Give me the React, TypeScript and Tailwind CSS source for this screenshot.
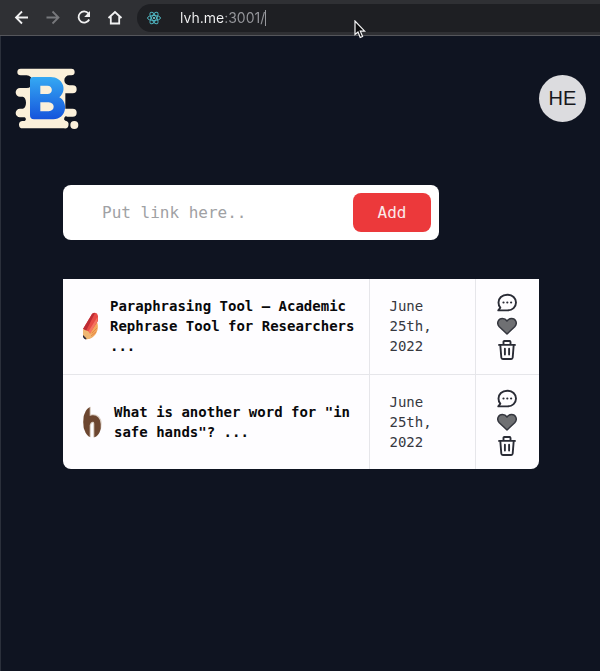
import React from "react";

type Bookmark = { id: number; title: string; date: string; icon: React.ReactNode };

const Logo = () => (
  <svg viewBox="9 6 192 192" className="h-16 w-16" role="img" aria-label="B">
    <defs>
      <linearGradient id="logo-blue" x1="0" y1="0" x2="0" y2="1">
        <stop offset="0" stopColor="#35a9f3" />
        <stop offset="1" stopColor="#1554dc" />
      </linearGradient>
    </defs>
    <path
      fill="#fbf0da"
      d="M26 14H178A10 10 0 0 1 178 34H172A14 14 0 0 0 172 64H182A12 12 0 0 1 182 88H160V134H182A12 12 0 0 1 182 158H166A6 6 0 0 0 160 170A11 11 0 0 1 156 193H32A11 11 0 0 1 32 171H38A6 6 0 0 0 38 160H24A13 13 0 0 1 24 134H32A10 18 0 0 0 32 98H24A13 13 0 0 1 24 72H44A18 19 0 0 0 44 34H26A10 10 0 0 1 26 14Z"
    />
    <circle cx="187" cy="183" r="12" fill="#fbf0da" />
    <path
      fill="url(#logo-blue)"
      fillRule="evenodd"
      d="M64 39H116C152 39 168 78 142 100C170 114 164 166 124 166H66C58 166 54 162 54 154V49C54 42 58 39 64 39ZM85 65V90H106C124 90 124 65 106 65ZM85 115V142H110C130 142 130 115 110 115Z"
    />
  </svg>
);

const ReactMark = () => (
  <svg viewBox="0 0 16 16" className="h-4 w-4" fill="none" stroke="#4fb3bf" aria-hidden="true">
    <ellipse cx="8" cy="8" rx="6.500" ry="2.500" />
    <ellipse cx="8" cy="8" rx="6.500" ry="2.500" transform="rotate(60 8 8)" />
    <ellipse cx="8" cy="8" rx="6.500" ry="2.500" transform="rotate(120 8 8)" />
    <circle cx="8" cy="8" r="1" fill="#7fe0ea" stroke="none" />
  </svg>
);

const PencilIcon = () => (
  <svg viewBox="0 0 16 30" className="h-[30px] w-4 shrink-0" aria-hidden="true">
    <path d="M14 11C16 16 14.500 22 11 25C9 27 6 28.500 4 28L7 16Z" fill="#f3a75c" />
    <path d="M0 18L9 3Q11 1 14 2.500L15 5V10L7 22Z" fill="#e64a45" />
    <path d="M0 18L9 3Q10 1.500 12 2L3 20Z" fill="#bd2c35" />
    <path d="M5 21L14.500 6V10L7 23Z" fill="#f57461" />
    <path d="M0 18L3 19.500L5 20L7 23L10 24Q8 28 3 28.500L0 26Z" fill="#efb773" />
    <path d="M0 24L3.500 27.500L3 28.500Q1 28 0 26Z" fill="#2b2b3b" />
    <path d="M9 22L14 17M8 25L13 21" stroke="#e48948" strokeWidth="1" />
  </svg>
);

const LetterIcon = () => (
  <svg viewBox="0 0 20 32" className="h-8 w-5 shrink-0" aria-hidden="true">
    <defs>
      <clipPath id="letter-oval">
        <ellipse cx="9.500" cy="16" rx="9.500" ry="15.500" />
      </clipPath>
    </defs>
    <g clipPath="url(#letter-oval)" fill="none">
      <path d="M3.500 0V32M3.500 19C5 11 14.500 10 14.500 18V32" stroke="#d9ccc1" strokeWidth="8.600" />
      <path d="M3.500 1V32M3.500 19C5 11 14.500 10 14.500 18V32" stroke="#6c4630" strokeWidth="6.400" />
    </g>
  </svg>
);

const CommentIcon = () => (
  <svg viewBox="0 0 20 20" className="h-5 w-5" fill="none" stroke="#2a2c36" strokeWidth="1.900" strokeLinejoin="round" aria-hidden="true">
    <path d="M1.300 18.400H10.300C15.500 18.400 19 15 19 10.600C19 6.100 15.500 2.700 10.300 2.700C4.900 2.700 1.500 6.200 1.500 10.600C1.500 12.700 2.200 14.400 3.300 15.700Z" />
    <path d="M6.500 10.500h.01M10.300 10.500h.01M14.100 10.500h.01" strokeWidth="2.200" strokeLinecap="round" />
  </svg>
);

const HeartIcon = () => (
  <svg viewBox="0 0 20 20" className="h-5 w-5" fill="#6f7073" stroke="#34363e" strokeWidth="1.500" strokeLinejoin="round" aria-hidden="true">
    <path d="M10 18L2.300 10.800C-1 7 1.500 2.600 5.400 2.600C7.500 2.600 9 3.500 10 5C11 3.500 12.500 2.600 14.600 2.600C18.500 2.600 21 7 17.700 10.800Z" />
  </svg>
);

const TrashIcon = () => (
  <svg viewBox="0 0 20 20" className="h-5 w-5" fill="none" stroke="#2a2c36" strokeWidth="1.900" strokeLinejoin="round" strokeLinecap="round" aria-hidden="true">
    <path d="M2 4.900H18M6.500 4.700V1.900C6.500 1.300 6.800 1 7.400 1H12.600C13.200 1 13.500 1.300 13.500 1.900V4.700" />
    <path d="M3.300 5L4.300 17.500C4.400 18.500 4.900 19 5.800 19H14.200C15.100 19 15.600 18.500 15.700 17.500L16.700 5" />
    <path d="M7.900 8.700V14.500M12.100 8.700V14.500" />
  </svg>
);

const NavIcon = ({ children }: { children: React.ReactNode }) => (
  <svg viewBox="0 0 16 16" className="h-4 w-4" fill="none" stroke="currentColor" strokeWidth="1.800" aria-hidden="true">
    {children}
  </svg>
);

const bookmarks: Bookmark[] = [
  { id: 1, title: "Paraphrasing Tool — Academic Rephrase Tool for Researchers ...", date: "June 25th, 2022", icon: <PencilIcon /> },
  { id: 2, title: 'What is another word for "in safe hands"? ...', date: "June 25th, 2022", icon: <LetterIcon /> },
];

const BrowserBar = () => (
  <nav aria-label="Browser" className="flex h-9 items-center border-b border-[#55565b] bg-[#2f3034] pl-[14px] text-[#f1f1f2]">
    <div className="flex gap-[15px]">
      <button type="button" aria-label="Back">
        <NavIcon><path d="M14 7.500H2.200M8 1.500L2 7.500L8 13.500" /></NavIcon>
      </button>
      <button type="button" aria-label="Forward" className="text-[#77787c]">
        <NavIcon><path d="M1.500 7.500H13.300M7.500 1.500L13.500 7.500L7.500 13.500" /></NavIcon>
      </button>
      <button type="button" aria-label="Reload">
        <NavIcon>
          <path d="M12.500 3.500A5.600 5.600 0 1 0 13.200 9.500" />
          <path d="M14 1V7H8.200Z" fill="currentColor" stroke="none" />
        </NavIcon>
      </button>
      <button type="button" aria-label="Home">
        <NavIcon><path d="M1.500 8L8 2L14.500 8M3.800 6.500V13.500H12.200V6.500" /></NavIcon>
      </button>
    </div>
    <div className="ml-[14px] flex h-7 flex-1 items-center rounded-l-full bg-[#1e1f23] pl-[9px]">
      <ReactMark />
      <input
        aria-label="Address"
        defaultValue="lvh.me:3001/"
        className="ml-[18px] field-sizing-content bg-[linear-gradient(90deg,#f4f4f5_45px,#97989d_45px)] bg-clip-text font-['Inter',sans-serif] text-sm text-transparent outline-none"
      />
      <span className="h-4 w-px bg-[#97989d]" />
    </div>
  </nav>
);

export default function App() {
  return (
    <div className="relative min-h-screen bg-[#0f1421] font-['DejaVu_Sans_Mono',monospace]">
      <BrowserBar />
      <div className="min-h-[calc(100vh-36px)] border-l border-[#2b303b]">
        <header className="flex items-center justify-between pt-[30px] pr-[14px] pl-[14px]">
          <Logo />
          <button type="button" className="h-[47px] w-[47px] rounded-full bg-[#dcdcdf] font-['Liberation_Sans',sans-serif] text-xl text-[#17181c]">
            HE
          </button>
        </header>
        <main className="pt-[55px] pr-[61px] pl-[62px]">
          <form onSubmit={(e) => e.preventDefault()} className="flex h-[55px] w-[79%] items-center rounded-lg bg-white pr-2 pl-[39px]">
            <input
              type="text"
              aria-label="Link"
              placeholder="Put link here.."
              className="min-w-0 flex-1 text-base text-gray-800 outline-none placeholder:text-[#a0a1a4]"
            />
            <button type="submit" className="h-[39px] w-[78px] rounded-lg bg-[#ec393b] text-base text-[#fbe9e9]">
              Add
            </button>
          </form>
          <div className="mt-[39px] overflow-hidden rounded-b-lg bg-[#fefdff]">
            <table className="w-full table-fixed border-collapse text-sm leading-5">
              <colgroup>
                <col />
                <col className="w-[106px]" />
                <col className="w-[64px]" />
              </colgroup>
              <tbody className="divide-y divide-[#e6e6ea]">
                {bookmarks.map((b) => (
                  <tr key={b.id} className="h-[95px] divide-x divide-[#e6e6ea]">
                    <th scope="row" className="pr-2 pl-5 text-left font-bold text-[#09090b]">
                      <div className="flex items-center gap-[11px]">
                        {b.icon}
                        <span>{b.title}</span>
                      </div>
                    </th>
                    <td className="px-5 text-[#36383f]">{b.date}</td>
                    <td>
                      <div className="flex flex-col items-center gap-1">
                        <button type="button" aria-label="Comment"><CommentIcon /></button>
                        <button type="button" aria-label="Like"><HeartIcon /></button>
                        <button type="button" aria-label="Delete"><TrashIcon /></button>
                      </div>
                    </td>
                  </tr>
                ))}
              </tbody>
            </table>
          </div>
        </main>
      </div>
      <svg viewBox="0 0 12 19" className="pointer-events-none absolute top-5 left-[354px] h-[19px] w-3" aria-hidden="true">
        <path d="M1 1V14.500L4 12L6.200 17.500L8.600 16.500L6.300 11.200H10.700Z" fill="#0b0b0d" stroke="#f4f4f5" strokeWidth="1.200" />
      </svg>
    </div>
  );
}
